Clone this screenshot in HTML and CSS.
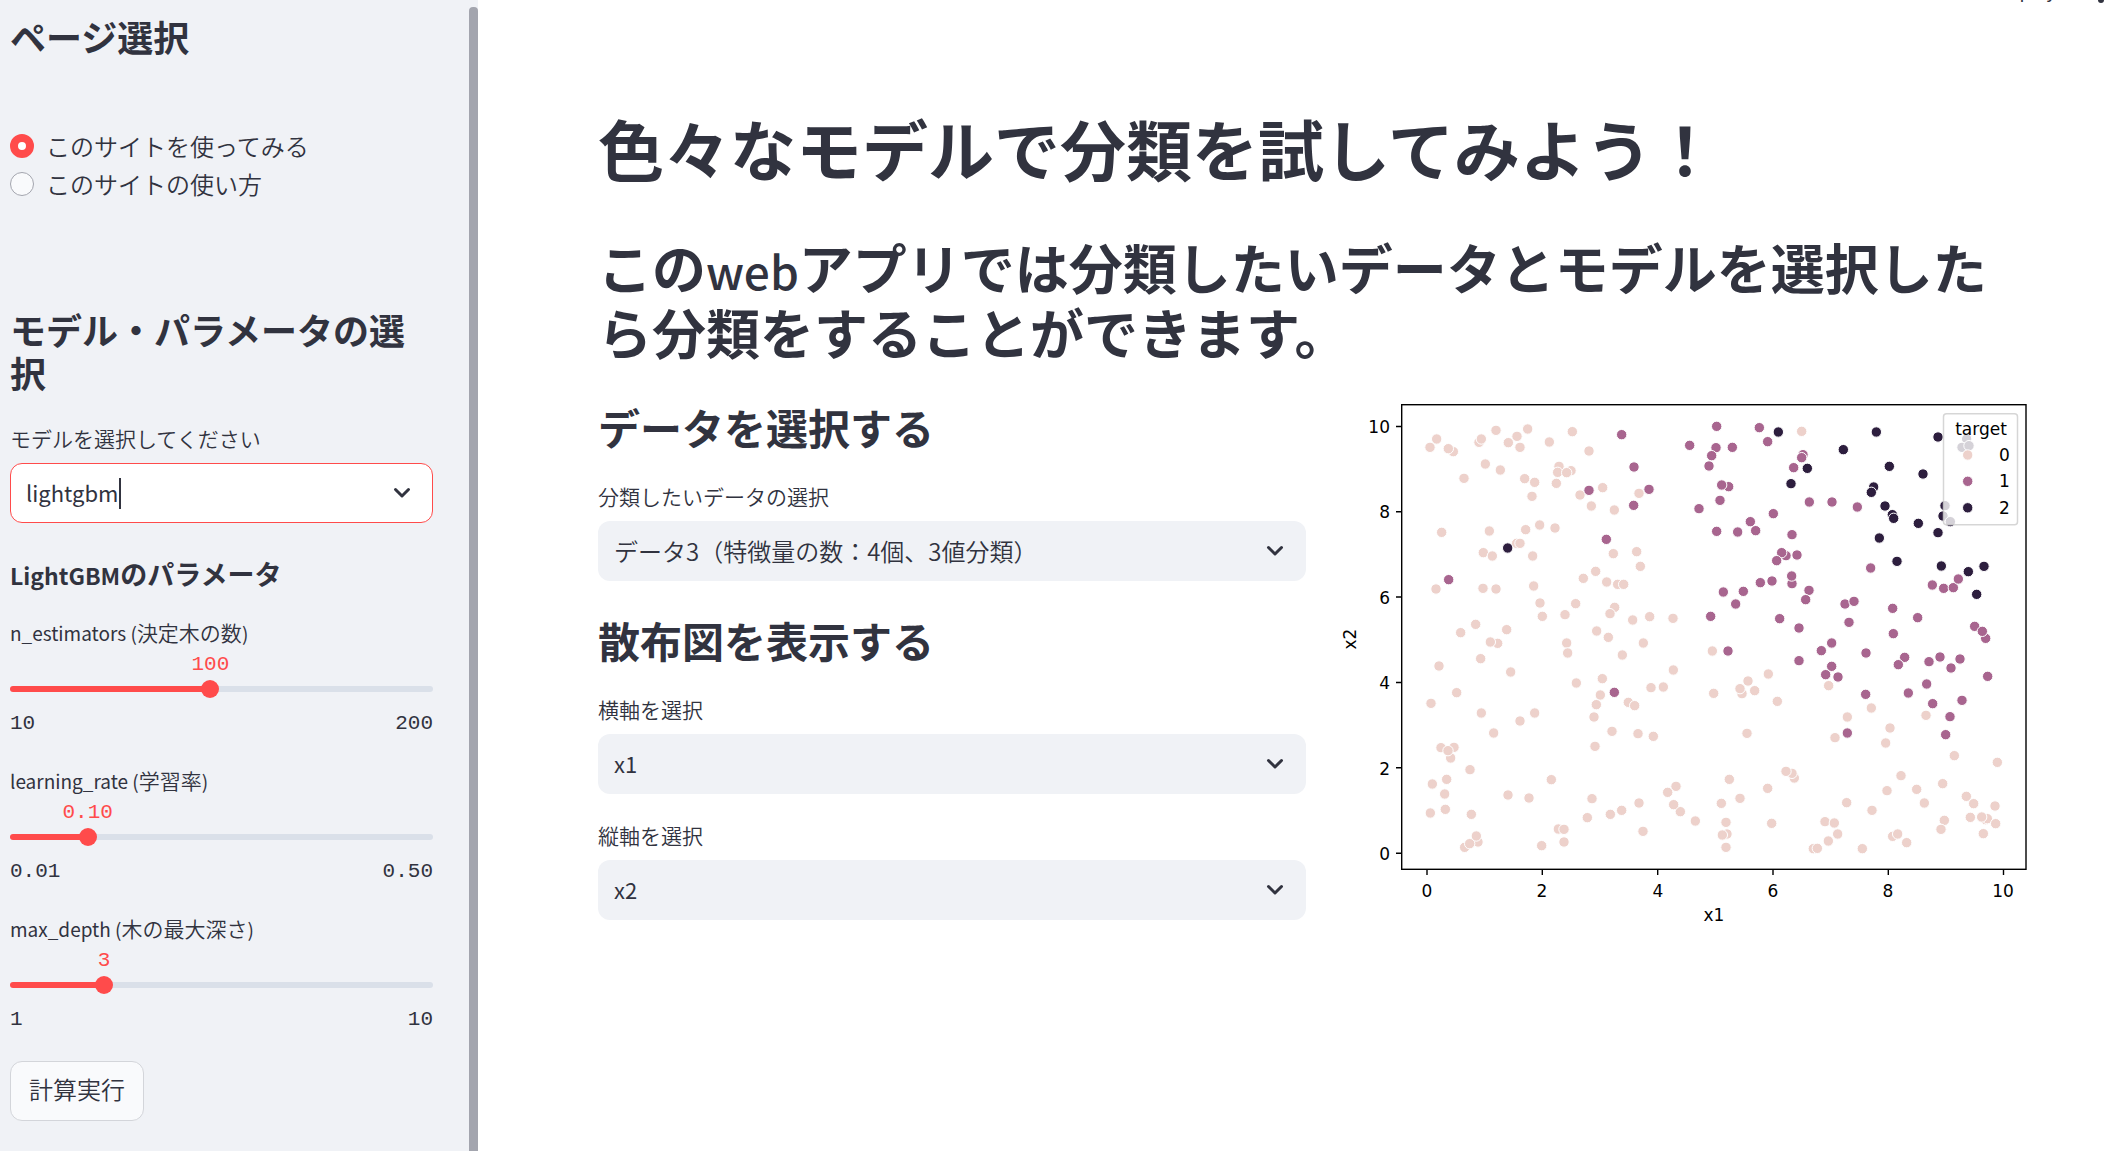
FILE: index.html
```html
<!DOCTYPE html>
<html lang="ja">
<head>
<meta charset="utf-8">
<meta name="viewport" content="width=device-width, initial-scale=1">
<title>色々なモデルで分類を試してみよう！</title>
<link rel="stylesheet" href="styles.css">
</head>
<body>
<div class="app">
  <aside class="sidebar">
    <form class="sidebar-content">
      <h2 class="side-title">ページ選択</h2>
      <div class="radio-group" role="radiogroup" aria-label="ページ選択">
        <label class="radio"><input type="radio" name="page" checked>このサイトを使ってみる</label>
        <label class="radio"><input type="radio" name="page">このサイトの使い方</label>
      </div>

      <h2 class="side-title side-title-model">モデル・パラメータの選択</h2>
      <label class="field-label" for="model">モデルを選択してください</label>
      <div class="combobox">
        <input id="model" class="combobox-input" type="text" role="combobox" aria-expanded="false" value="lightgbm">
        <span class="caret"></span>
        <svg class="chevron" viewBox="0 0 24 24" aria-hidden="true"><path d="M5.500 8.500l6.500 6.500 6.500-6.500"/></svg>
      </div>

      <h3 class="side-subtitle"><span class="latin">LightGBM</span>のパラメータ</h3>

      <div class="slider">
        <label class="slider-label" for="n-estimators"><span class="latin">n_estimators (</span>決定木の数<span class="latin">)</span></label>
        <div class="slider-body" style="--pos: 47.37%">
          <output class="slider-value" for="n-estimators">100</output>
          <div class="slider-track">
            <span class="bar"></span>
            <input id="n-estimators" class="range" type="range" min="10" max="200" value="100">
          </div>
          <div class="slider-ends"><span>10</span><span>200</span></div>
        </div>
      </div>
      <div class="slider">
        <label class="slider-label" for="learning-rate"><span class="latin">learning_rate (</span>学習率<span class="latin">)</span></label>
        <div class="slider-body" style="--pos: 18.37%">
          <output class="slider-value" for="learning-rate">0.10</output>
          <div class="slider-track">
            <span class="bar"></span>
            <input id="learning-rate" class="range" type="range" min="0.01" max="0.5" step="0.01" value="0.1">
          </div>
          <div class="slider-ends"><span>0.01</span><span>0.50</span></div>
        </div>
      </div>
      <div class="slider">
        <label class="slider-label" for="max-depth"><span class="latin">max_depth (</span>木の最大深さ<span class="latin">)</span></label>
        <div class="slider-body" style="--pos: 22.22%">
          <output class="slider-value" for="max-depth">3</output>
          <div class="slider-track">
            <span class="bar"></span>
            <input id="max-depth" class="range" type="range" min="1" max="10" value="3">
          </div>
          <div class="slider-ends"><span>1</span><span>10</span></div>
        </div>
      </div>

      <button class="run-button" type="button">計算実行</button>
    </form>
    <div class="scrollbar"></div>
  </aside>

  <main class="main">
    <div class="toolbar">
      <button class="deploy" type="button">Deploy</button>
      <button class="menu" type="button" aria-label="メニュー"><svg viewBox="0 0 8 24" aria-hidden="true"><circle cx="4" cy="5" r="3"/><circle cx="4" cy="13" r="3"/><circle cx="4" cy="21" r="3"/></svg></button>
    </div>
    <h1 class="title">色々なモデルで分類を試してみよう！</h1>
    <h2 class="lead">この<span class="latin">web</span>アプリでは分類したいデータとモデルを選択したら分類をすることができます。</h2>

    <div class="columns">
      <section class="controls">
        <h3 class="section-title">データを選択する</h3>
        <label class="field-label" for="dataset">分類したいデータの選択</label>
        <div class="select-box">
          <select id="dataset" class="select"><option>データ3（特徴量の数：4個、3値分類）</option></select>
          <svg class="chevron" viewBox="0 0 24 24" aria-hidden="true"><path d="M5.500 8.500l6.500 6.500 6.500-6.500"/></svg>
        </div>

        <h3 class="section-title section-title-next">散布図を表示する</h3>
        <label class="field-label" for="x-axis">横軸を選択</label>
        <div class="select-box">
          <select id="x-axis" class="select select-latin"><option>x1</option><option>x2</option></select>
          <svg class="chevron" viewBox="0 0 24 24" aria-hidden="true"><path d="M5.500 8.500l6.500 6.500 6.500-6.500"/></svg>
        </div>
        <label class="field-label field-label-next" for="y-axis">縦軸を選択</label>
        <div class="select-box">
          <select id="y-axis" class="select select-latin"><option>x2</option><option>x1</option></select>
          <svg class="chevron" viewBox="0 0 24 24" aria-hidden="true"><path d="M5.500 8.500l6.500 6.500 6.500-6.500"/></svg>
        </div>
      </section>

      <section class="chart-column">
        <svg class="chart" viewBox="0 13 708 536" role="img" aria-label="x1とx2の散布図">
          <g id="points" class="points"></g>
          <rect class="frame" x="71.700" y="15.700" width="624.300" height="464.600"/>
          <path class="ticks" d="M97 480v6M212.300 480v6M327.700 480v6M443 480v6M558.300 480v6M673.500 480v6M72 37.500h-6M72 122.800h-6M72 208h-6M72 293.500h-6M72 378.800h-6M72 464.300h-6"/>
          <g class="axis-text" text-anchor="middle">
            <text x="97" y="508">0</text><text x="212" y="508">2</text><text x="328" y="508">4</text><text x="443" y="508">6</text><text x="558" y="508">8</text><text x="673" y="508">10</text>
            <text x="384" y="532">x1</text>
            <text transform="translate(26 250) rotate(-90)">x2</text>
          </g>
          <g class="axis-text" text-anchor="end">
            <text x="60" y="44">10</text><text x="60" y="129">8</text><text x="60" y="215">6</text><text x="60" y="300">4</text><text x="60" y="386">2</text><text x="60" y="471">0</text>
          </g>
          <rect class="legend-box" x="613.500" y="24.700" width="74" height="111" rx="3"/>
          <g class="axis-text">
            <text x="651" y="46" text-anchor="middle">target</text>
            <text x="669" y="72">0</text><text x="669" y="98">1</text><text x="669" y="125">2</text>
          </g>
          <g class="points">
            <circle class="c0" cx="637.700" cy="66" r="5.200"/>
            <circle class="c1" cx="637.700" cy="92.300" r="5.200"/>
            <circle class="c2" cx="637.700" cy="118.800" r="5.200"/>
          </g>
        </svg>
      </section>
    </div>
  </main>
</div>
<script src="chart.js"></script>
</body>
</html>
```
FILE: styles.css
```css
* {
  box-sizing: border-box;
}

:root {
  --text: #31333f;
  --primary: #ff4b4b;
  --panel: #f0f2f6;
}

body {
  margin: 0;
  color: var(--text);
  background: #fff;
  font-family: "Noto Sans CJK JP", "Noto Sans", sans-serif;
  font-size: 24px;
  font-weight: 350;
}

h1, h2, h3 {
  margin: 0;
  font-weight: 700;
}

button, input, select {
  margin: 0;
  color: inherit;
  font: inherit;
}

.latin {
  font-weight: 400;
  line-height: 1;
}

.app {
  display: grid;
  grid-template-columns: 478px 1fr;
  min-height: 100vh;
}

/* Sidebar */

.sidebar {
  display: flex;
  background: var(--panel);
}

.sidebar-content {
  flex: 1;
  padding: 15px 36px 16px 10px;
}

.scrollbar {
  width: 9px;
  margin-top: 7px;
  border-radius: 4px 4px 0 0;
  background: #a3a5ae;
}

.side-title {
  font-size: 36px;
  line-height: 43px;
}

.radio-group {
  display: grid;
  gap: 2px;
  margin-top: 70px;
}

.radio {
  display: flex;
  align-items: center;
  gap: 12px;
  line-height: 36px;
}

.radio input {
  appearance: none;
  width: 24px;
  height: 24px;
  border: 1px solid #a3a5ae;
  border-radius: 50%;
  background: #f9fafc;
}

.radio input:checked {
  border: 8px solid var(--primary);
  background: #fff;
}

.side-title-model {
  margin-top: 106px;
}

.field-label {
  display: block;
  margin: 28px 0 9px;
  font-size: 21px;
  line-height: 32px;
}

.combobox {
  display: flex;
  align-items: center;
  height: 60px;
  padding: 0 18px 0 15px;
  border: 1px solid var(--primary);
  border-radius: 12px;
  background: #fff;
}

.combobox-input {
  field-sizing: content;
  padding: 0 0 2px;
  border: 0;
  outline: 0;
  background: none;
  font-size: 22px;
  font-weight: 400;
}

.caret {
  width: 2px;
  height: 31px;
  background: var(--text);
}

.chevron {
  width: 24px;
  height: 24px;
  fill: none;
  stroke: var(--text);
  stroke-width: 3;
  stroke-linecap: round;
  stroke-linejoin: round;
}

.combobox .chevron {
  margin-left: auto;
}

.side-subtitle {
  margin: 35px 0 27px;
  font-size: 27px;
  line-height: 32px;
}

.side-subtitle .latin {
  font-size: 23px;
  font-weight: 700;
}

.slider {
  margin-bottom: 29px;
}

.slider-label {
  display: block;
  font-size: 21px;
  line-height: 30px;
}

.slider-label .latin {
  font-size: 19px;
}

.slider-body {
  padding-top: 6px;
  font-family: "Liberation Mono", monospace;
  font-size: 21px;
  font-weight: 400;
  line-height: 24px;
}

.slider-value {
  display: block;
  width: max-content;
  margin-left: var(--pos);
  color: var(--primary);
  transform: translateX(-50%);
}

.slider-track {
  display: grid;
  align-items: center;
  margin: 3px 0 14px;
}

.slider-track > * {
  grid-area: 1 / 1;
}

.bar {
  height: 6px;
  border-radius: 3px;
  background: linear-gradient(to right, var(--primary) var(--pos), #dae0e9 var(--pos));
}

.range {
  appearance: none;
  width: calc(100% + 18px);
  height: 18px;
  margin: 0 -9px;
  background: none;
}

.range::-webkit-slider-thumb {
  appearance: none;
  width: 18px;
  height: 18px;
  border-radius: 50%;
  background: var(--primary);
}

.slider-ends {
  display: flex;
  justify-content: space-between;
}

.run-button {
  display: block;
  height: 60px;
  padding: 0 18px 6px;
  border: 1px solid #d3d5da;
  border-radius: 12px;
  background: #f9fafc;
}

/* Main area */

.main {
  position: relative;
  padding: 107px 70px 96px 120px;
}

.toolbar {
  position: absolute;
  top: -23px;
  right: 3px;
  display: flex;
  align-items: flex-end;
  gap: 41px;
}

.deploy,
.menu {
  padding: 0;
  border: 0;
  background: none;
  font-size: 18px;
  font-weight: 400;
  line-height: 26px;
}

.menu svg {
  display: block;
  width: 8px;
  height: 24px;
  fill: var(--text);
}

.title {
  font-size: 66px;
  line-height: 80px;
}

.lead {
  margin-top: 47px;
  font-size: 54px;
  line-height: 65px;
}

.lead .latin {
  font-size: 46px;
  font-weight: 500;
}

.columns {
  display: grid;
  grid-template-columns: 1fr 1fr;
  gap: 24px;
  margin-top: 38px;
}

.section-title {
  font-size: 42px;
  line-height: 50px;
}

.section-title-next {
  margin-top: 34px;
}

.field-label-next {
  margin-top: 25px;
}

.select-box {
  display: grid;
  align-items: center;
  height: 60px;
  border-radius: 12px;
  background: var(--panel);
}

.select-box > * {
  grid-area: 1 / 1;
}

.select {
  appearance: none;
  width: 100%;
  height: 60px;
  padding: 0 48px 2px 16px;
  border: 0;
  border-radius: 12px;
  background: none;
}

.select-latin {
  font-size: 22px;
  font-weight: 400;
}

.select-box .chevron {
  justify-self: end;
  margin-right: 19px;
  pointer-events: none;
}

/* Scatter plot */

.chart {
  display: block;
  width: 100%;
  overflow: visible;
}

.frame {
  fill: none;
  stroke: #000;
  stroke-width: 1.4;
}

.ticks {
  stroke: #000;
  stroke-width: 1.4;
}

.axis-text {
  fill: #000;
  font-family: "DejaVu Sans", sans-serif;
  font-size: 17px;
  font-weight: 400;
}

.legend-box {
  fill: #fff;
  fill-opacity: 0.8;
  stroke: #ccc;
  stroke-opacity: 0.8;
  stroke-width: 1.5;
}

.points circle {
  stroke: #fff;
  stroke-width: 1;
}

.c0 { fill: #edd1cb; }
.c1 { fill: #a8658f; }
.c2 { fill: #2d1e3e; }
```
FILE: chart.js
```js
// Points are grouped by plot quadrant and class, in thirds of a plot unit,
// measured from the quadrant's own origin.
const quadrants = [
  { x: 0, y: 0, classes: [
    "498,124 593,120 561,142 727,128 320,150 300,175 370,188 355,179 447,160 454,150 535,161 570,175 658,159 777,186 466,225 511,243 402,268 584,269 614,280 687,232 723,245 683,250 710,251 679,283 606,322 818,296 750,318 927,313 784,351 853,363 335,430 478,426 587,422 629,408 675,417 560,463 570,463 460,491 487,501 608,501 850,494 920,488 931,532 797,547 760,568 830,579 863,586 881,586 318,600 459,598 498,600 611,591 630,642 737,644 637,682 705,677 854,655 840,674 908,693 959,683 1029,688 437,706 392,731 530,722 800,726 835,745 503,763 481,759 710,762 940,762",
    "875,137 912,234 957,301 777,304 911,349 829,451 356,572",
    "533,477"
  ] },
  { x: 1050, y: 0, classes: [
    "365,127 97,786",
    "110,112 238,116 263,158 29,169 108,176 157,175 95,200 87,231 369,197 365,206 341,236 146,293 125,288 120,334 57,359 388,339 456,339 532,354 280,374 211,398 110,427 173,429 227,425 336,437 318,500 305,491 351,498 290,515 572,537 241,581 276,576 336,584 335,561 130,609 190,607 167,645 387,604 377,632 92,682 299,689 357,717 495,645 522,637 507,700 638,658 713,686 640,734 455,762 424,785 144,786 558,792 757,588 791,598 820,596 835,570 884,712 917,748 907,727",
    "295,129 589,129 774,144 490,182 382,238 333,284 628,232 729,255 581,294 574,310 615,351 637,377 641,388 715,403 774,431 598,447 651,517 784,531 912,532 865,548 890,616 860,150 846,175 867,170 795,350 789,381 811,398"
  ] },
  { x: 0, y: 780, classes: [
    "713,12 452,29 877,18 327,51 542,69 1030,63 817,89 739,102 963,116 1000,114 811,138 799,167 895,160 914,170 380,131 303,163 454,192 614,192 570,216 792,204 491,252 846,247 924,254 970,262 795,292 333,296 372,295 362,327 354,305 420,362 350,391 307,405 344,435 664,392 534,438 597,447 786,449 346,481 301,492 424,496 772,506 841,496 875,484 927,462 1038,412 1013,430 1051,488 1031,467 939,547 685,540 702,541 702,579 635,590 404,595 444,579 419,584 439,561",
    "853,130",
    ""
  ] },
  { x: 1050, y: 780, classes: [
    "265,75 204,96 186,134 180,119 224,125 101,133 292,157 446,110 574,177 502,204 465,266 201,253 738,199 630,237 617,282 823,320 952,340 343,387 336,373 318,367 148,391 180,448 124,463 263,418 46,516 138,520 141,555 127,558 138,595 275,523 500,461 576,484 435,518 463,522 473,555 445,576 400,599 412,598 547,599 663,380 621,425 710,421 788,404 733,462 793,514 783,541 638,562 653,555 680,581 859,442 881,464 945,471 871,505 917,512 922,509 905,504 947,524 910,554",
    "357,35 455,52 437,77 474,84 557,136 674,25 655,47 747,38 780,24 840,30 813,57 923,82 740,105 685,132 846,154 758,164 810,203 797,257 502,252",
    ""
  ] }
];

const layer = document.getElementById("points");
for (const quadrant of quadrants) {
  quadrant.classes.forEach((list, index) => {
    for (const pair of list.split(" ").filter(Boolean)) {
      const [x, y] = pair.split(",").map(Number);
      const dot = document.createElementNS("http://www.w3.org/2000/svg", "circle");
      dot.setAttribute("class", "c" + index);
      dot.setAttribute("cx", (quadrant.x + x) / 3);
      dot.setAttribute("cy", (quadrant.y + y) / 3);
      dot.setAttribute("r", 5.2);
      layer.append(dot);
    }
  });
}
```
